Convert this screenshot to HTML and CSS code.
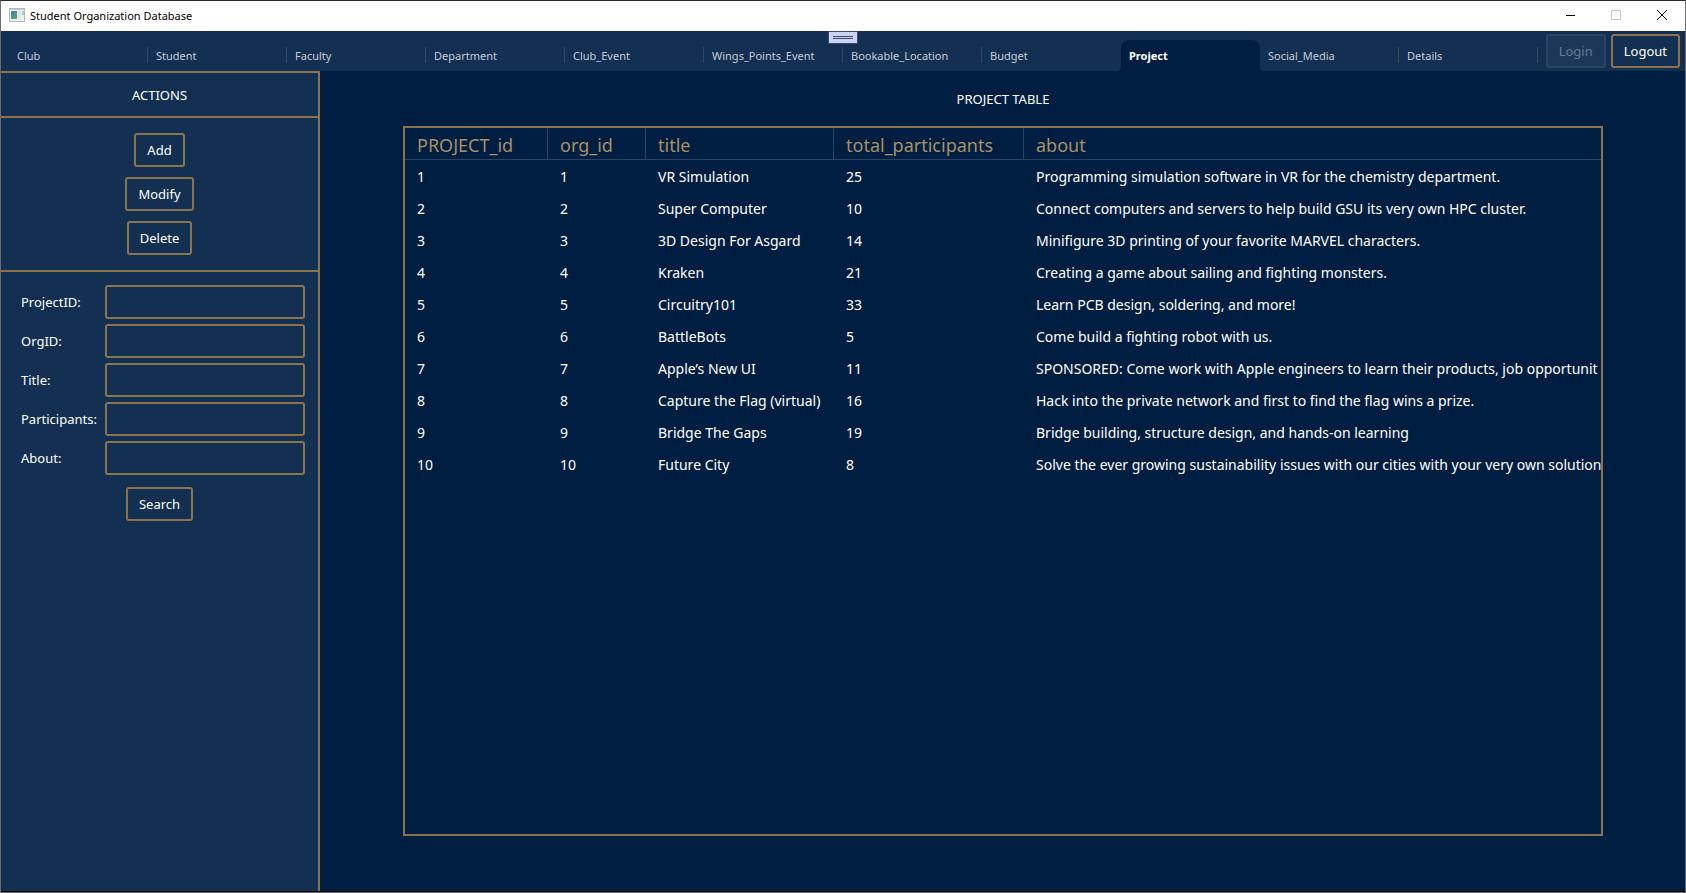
FILE: index.html
```html
<!DOCTYPE html>
<html lang="en">
<head>
<meta charset="utf-8">
<title>Student Organization Database</title>
<link rel="stylesheet" href="styles.css">
</head>
<body>
<div class="window">
  <header class="titlebar">
    <svg class="app-icon" width="16" height="14" viewBox="0 0 16 14" aria-hidden="true">
      <defs><linearGradient id="pane" x1="0" y1="0" x2="0.6" y2="1"><stop offset="0" stop-color="#3f78b0"/><stop offset="1" stop-color="#4fa877"/></linearGradient></defs>
      <rect x="0.5" y="0.5" width="15" height="13" fill="#eef0f2" stroke="#b4b8bc"/>
      <rect x="1" y="1" width="14" height="1" fill="#c9cdd1"/>
      <rect x="2" y="3" width="6" height="8" fill="url(#pane)"/>
      <rect x="9" y="3" width="3" height="8" fill="#e0e4e8"/>
      <rect x="13" y="3" width="2" height="4" fill="#a9cfae"/>
    </svg>
    <span class="app-title">Student Organization Database</span>
    <div class="window-controls">
      <button class="wc" aria-label="Minimize"><svg width="10" height="10" viewBox="0 0 10 10"><path d="M1 5.500H10" stroke="#000"/></svg></button>
      <button class="wc" aria-label="Maximize" disabled><svg width="10" height="10" viewBox="0 0 10 10"><rect x="0.5" y="0.5" width="9" height="9" fill="none" stroke="#c8c8c8"/></svg></button>
      <button class="wc" aria-label="Close"><svg width="10" height="10" viewBox="0 0 10 10"><path d="M0 0L10 10M10 0L0 10" stroke="#000"/></svg></button>
    </div>
  </header>

  <div class="topbar">
    <nav class="tabs">
      <a class="tab" href="#club">Club</a>
      <a class="tab" href="#student">Student</a>
      <a class="tab" href="#faculty">Faculty</a>
      <a class="tab" href="#department">Department</a>
      <a class="tab" href="#club-event">Club_Event</a>
      <a class="tab" href="#wings">Wings_Points_Event</a>
      <a class="tab" href="#location">Bookable_Location</a>
      <a class="tab no-rule" href="#budget">Budget</a>
      <a class="tab selected" href="#project" aria-current="page">Project</a>
      <a class="tab" href="#social">Social_Media</a>
      <a class="tab" href="#details">Details</a>
    </nav>
    <div class="session">
      <button class="btn" disabled>Login</button>
      <button class="btn">Logout</button>
    </div>
    <div class="drag-handle"><span class="grip"></span></div>
  </div>

  <div class="content">
    <aside class="sidebar">
      <h2 class="panel-title">ACTIONS</h2>
      <div class="actions">
        <button class="btn">Add</button>
        <button class="btn">Modify</button>
        <button class="btn">Delete</button>
      </div>
      <form class="search">
        <label for="pid">ProjectID:</label><input id="pid" type="text">
        <label for="oid">OrgID:</label><input id="oid" type="text">
        <label for="ttl">Title:</label><input id="ttl" type="text">
        <label for="par">Participants:</label><input id="par" type="text">
        <label for="abt">About:</label><input id="abt" type="text">
        <button class="btn submit" type="button">Search</button>
      </form>
    </aside>

    <main class="main">
      <h1 class="table-title">PROJECT TABLE</h1>
      <div class="grid">
        <table>
          <colgroup><col class="c-id"><col class="c-org"><col class="c-title"><col class="c-total"><col></colgroup>
          <thead><tr><th>PROJECT_id</th><th>org_id</th><th>title</th><th>total_participants</th><th>about</th></tr></thead>
          <tbody>
            <tr><td>1</td><td>1</td><td>VR Simulation</td><td>25</td><td>Programming simulation software in VR for the chemistry department.</td></tr>
            <tr><td>2</td><td>2</td><td>Super Computer</td><td>10</td><td>Connect computers and servers to help build GSU its very own HPC cluster.</td></tr>
            <tr><td>3</td><td>3</td><td>3D Design For Asgard</td><td>14</td><td>Minifigure 3D printing of your favorite MARVEL characters.</td></tr>
            <tr><td>4</td><td>4</td><td>Kraken</td><td>21</td><td>Creating a game about sailing and fighting monsters.</td></tr>
            <tr><td>5</td><td>5</td><td>Circuitry101</td><td>33</td><td>Learn PCB design, soldering, and more!</td></tr>
            <tr><td>6</td><td>6</td><td>BattleBots</td><td>5</td><td>Come build a fighting robot with us.</td></tr>
            <tr><td>7</td><td>7</td><td>Apple’s New UI</td><td>11</td><td>SPONSORED: Come work with Apple engineers to learn their products, job opportunit</td></tr>
            <tr><td>8</td><td>8</td><td>Capture the Flag (virtual)</td><td>16</td><td>Hack into the private network and first to find the flag wins a prize.</td></tr>
            <tr><td>9</td><td>9</td><td>Bridge The Gaps</td><td>19</td><td>Bridge building, structure design, and hands-on learning</td></tr>
            <tr><td>10</td><td>10</td><td>Future City</td><td>8</td><td>Solve the ever growing sustainability issues with our cities with your very own solution</td></tr>
          </tbody>
        </table>
      </div>
    </main>
  </div>
</div>
</body>
</html>
```

FILE: styles.css
```css
:root {
  --panel: #132f52;
  --deep: #001e41;
  --gold: #8b734b;
  --gold-text: #a88f66;
  --rule: #2b4663;
}

* { box-sizing: border-box; }

body {
  margin: 0;
  font-family: "Noto Sans", "Open Sans", sans-serif;
  font-size: 13px;
  color: #fff;
}

.window {
  display: flex;
  flex-direction: column;
  min-height: 100vh;
  border: 1px solid #6b6b6b;
  border-top-color: #2b2b2b;
  background: var(--deep);
}

button { font: inherit; color: inherit; background: none; }

/* Title bar */
.titlebar {
  display: flex;
  align-items: center;
  height: 30px;
  padding: 0 0 2px 8px;
  background: #fff;
  color: #000;
}
.app-title { margin-left: 5px; font-size: 11px; }
.window-controls { display: flex; margin-left: auto; }
.wc {
  display: flex;
  align-items: center;
  justify-content: center;
  width: 46px;
  height: 28px;
  padding: 0;
  border: 0;
}

/* Tab strip */
.topbar {
  position: relative;
  display: flex;
  height: 40px;
  background: var(--panel);
}
.tabs { display: flex; flex: 0 1 1537px; padding: 9px 0 0 8px; }
.tab {
  position: relative;
  flex: 1 1 0;
  padding: 0 8px;
  font-size: 11px;
  line-height: 31px;
  color: #c4ccd6;
  text-decoration: none;
  white-space: nowrap;
}
.tab::after {
  content: "";
  position: absolute;
  top: 7px;
  right: 0;
  width: 1px;
  height: 16px;
  background: #2b4866;
}
.tab.no-rule::after { display: none; }
.tab.selected {
  border-radius: 8px 8px 0 0;
  background: var(--deep);
  color: #fff;
  font-weight: 700;
}
.tab.selected::before,
.tab.selected::after {
  content: "";
  position: absolute;
  top: auto;
  bottom: 0;
  width: 4px;
  height: 4px;
}
.tab.selected::before { left: -4px; background: radial-gradient(circle at 0 0, transparent 4px, var(--deep) 4px); }
.tab.selected::after { right: -4px; background: radial-gradient(circle at 100% 0, transparent 4px, var(--deep) 4px); }

.session {
  display: flex;
  gap: 5px;
  margin-left: auto;
  padding: 3px 5px 3px 0;
}

.drag-handle {
  position: absolute;
  top: 0;
  left: 50%;
  display: flex;
  align-items: center;
  justify-content: center;
  width: 30px;
  height: 13px;
  margin-left: -15px;
  border: 1px solid #3d4677;
  background: #ccd5f0;
}
.grip {
  width: 20px;
  height: 3px;
  border: solid #3d4677;
  border-width: 1px 0;
}

.btn {
  height: 34px;
  padding: 0 11px;
  border: 2px solid var(--gold);
  border-radius: 3px;
  line-height: 30px;
}
.btn:disabled {
  border-color: #294764;
  background: #1b3858;
  color: #677b92;
}

/* Side panel */
.content { display: flex; flex: 1; border-bottom: 1px solid #000; }
.sidebar {
  flex: none;
  width: 319px;
  border: solid var(--gold);
  border-width: 2px 2px 0 0;
  background: var(--panel);
}
.panel-title {
  margin: 0;
  padding-top: 1px;
  border-bottom: 2px solid var(--gold);
  font-size: 13px;
  font-weight: 400;
  line-height: 42px;
  text-align: center;
}
.actions {
  display: flex;
  flex-direction: column;
  align-items: center;
  gap: 10px;
  padding: 15px 0;
  border-bottom: 2px solid var(--gold);
}
.search {
  display: grid;
  grid-template-columns: 84px 1fr;
  gap: 5px 0;
  align-items: center;
  padding: 13px 13px 0 20px;
}
.search input {
  width: 100%;
  height: 34px;
  padding: 0 8px;
  border: 2px solid var(--gold);
  border-radius: 3px;
  background: none;
  color: #fff;
  font: inherit;
}
.submit { grid-column: 1 / -1; justify-self: center; margin: 7px 7px 0 0; }

/* Table area */
.main {
  display: flex;
  flex: 1;
  flex-direction: column;
  min-width: 0;
  padding: 0 82px 55px 83px;
}
.table-title {
  margin: 0;
  padding-top: 1px;
  font-size: 13px;
  font-weight: 400;
  line-height: 54px;
  text-align: center;
}
.grid { flex: 1; border: 2px solid var(--gold); overflow: hidden; }
table {
  width: 100%;
  border-collapse: separate;
  border-spacing: 0;
  table-layout: fixed;
}
.c-id { width: 143px; }
.c-org { width: 98px; }
.c-title { width: 188px; }
.c-total { width: 190px; }
th {
  height: 32px;
  padding: 3px 12px 0;
  border: solid var(--rule);
  border-width: 0 1px 1px 0;
  color: var(--gold-text);
  font-size: 18px;
  font-weight: 400;
  line-height: 28px;
  text-align: left;
}
th:last-child { border-right: 0; }
td {
  height: 32px;
  padding: 2px 0 0 12px;
  font-size: 14px;
  line-height: 30px;
  white-space: nowrap;
}
```
